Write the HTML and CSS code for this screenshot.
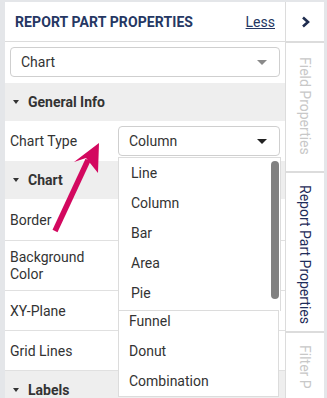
FILE: index.html
```html
<!DOCTYPE html>
<html>
<head>
<meta charset="utf-8">
<link rel="stylesheet" href="styles.css">
</head>
<body>
<div class="app">
  <div class="panel">
    <div class="header">
      <span class="title">REPORT PART PROPERTIES</span>
      <a class="less">Less</a>
    </div>
    <div class="part-select">
      <div class="select">
        <span>Chart</span>
        <span class="caret caret-light"></span>
      </div>
    </div>
    <div class="section"><span class="tri"></span>General Info</div>
    <div class="row row-type">
      <span class="label">Chart Type</span>
      <div class="select select-type">
        <span>Column</span>
        <span class="caret"></span>
      </div>
    </div>
    <div class="section"><span class="tri"></span>Chart</div>
    <div class="row row-border"><span class="label">Border</span></div>
    <div class="row row-bg"><span class="label">Background<br>Color</span></div>
    <div class="row"><span class="label">XY-Plane</span></div>
    <div class="row"><span class="label">Grid Lines</span></div>
    <div class="section"><span class="tri"></span>Labels</div>

    <div class="list list-top">
      <div class="item">Line</div>
      <div class="item">Column</div>
      <div class="item">Bar</div>
      <div class="item">Area</div>
      <div class="item">Pie</div>
      <div class="thumb"></div>
    </div>
    <div class="list list-bottom">
      <div class="item">Funnel</div>
      <div class="item">Donut</div>
      <div class="item">Combination</div>
    </div>

    <svg class="arrow" width="120" height="110" viewBox="0 0 120 110">
      <line x1="55" y1="231" x2="88" y2="160" stroke="#d3085f" stroke-width="5.5" transform="translate(0,-130)"/>
      <polygon points="99,143 74,162 86,158 98,173" fill="#d3085f" transform="translate(0,-130)"/>
    </svg>
  </div>
  <div class="tabs">
    <div class="tab tab-toggle">
      <svg width="10" height="12" viewBox="0 0 10 12"><polyline points="2,1.5 7,6 2,10.5" fill="none" stroke="#1f2d4f" stroke-width="2.6"/></svg>
    </div>
    <div class="tab tab-field"><span class="vtext">Field Properties</span></div>
    <div class="tab tab-report"><span class="vtext">Report Part Properties</span></div>
    <div class="tab tab-filter"><span class="vtext">Filter P</span></div>
  </div>
</div>
</body>
</html>
```

FILE: styles.css
```css
* { box-sizing: border-box; }
html, body { margin: 0; padding: 0; }
body {
  background: #e4e6e9;
  font-family: Roboto, "Liberation Sans", sans-serif;
  color: #333;
  width: 327px;
  height: 398px;
  overflow: hidden;
}
.app {
  display: flex;
  padding: 2px 3px 0 5px;
  height: 398px;
}
.panel {
  position: relative;
  width: 281px;
  background: #fff;
  border-right: 1px solid #dcdcdc;
  display: flex;
  flex-direction: column;
  overflow: hidden;
}
.panel > * { flex-shrink: 0; }
.header {
  height: 40px;
  display: flex;
  align-items: center;
  justify-content: space-between;
  padding: 0 10px 0 10px;
  border-bottom: 1px solid #dcdcdc;
}
.title {
  font-weight: bold;
  font-size: 14px;
  color: #253763;
  letter-spacing: 0.1px;
}
.less {
  font-size: 14px;
  color: #253763;
  text-decoration: underline;
}
.part-select {
  padding: 5px 5px 6px 5px;
}
.select {
  height: 30px;
  border: 1px solid #cfcfcf;
  border-radius: 4px;
  display: flex;
  align-items: center;
  justify-content: space-between;
  padding: 0 12px 0 10px;
  font-size: 14px;
  background: #fff;
}
.caret {
  width: 0; height: 0;
  border-left: 5px solid transparent;
  border-right: 5px solid transparent;
  border-top: 5px solid #222;
}
.caret-light { border-top-color: #8a8a8a; }
.section {
  height: 38px;
  background: #eeeeee;
  display: flex;
  align-items: center;
  padding-left: 8px;
  font-weight: bold;
  font-size: 14px;
  color: #333;
}
.tri {
  width: 0; height: 0;
  border-left: 3.5px solid transparent;
  border-right: 3.5px solid transparent;
  border-top: 4px solid #333;
  margin-right: 9px;
}
.row {
  height: 40px;
  display: flex;
  align-items: center;
  padding-left: 5px;
  border-bottom: 1px solid #e0e0e0;
  font-size: 14px;
}
.row-type { border-bottom: none; justify-content: space-between; padding-right: 5px; }
.select-type { width: 162px; }
.row-border { height: 42px; }
.row-bg { height: 50px; line-height: 17px; }
.label { color: #333; }
.list {
  position: absolute;
  background: #fff;
  border: 1px solid #dcdcdc;
  font-size: 14px;
  color: #333;
}
.list-top {
  left: 113px;
  top: 155px;
  width: 163px;
  height: 154px;
  border-bottom: none;
  overflow: hidden;
}
.list-top .item { padding-left: 12px; }
.list-bottom {
  left: 113px;
  top: 308px;
  width: 161px;
  height: 87px;
}
.list-bottom .item { padding-left: 10px; }
.list-bottom .item:first-child { margin-top: -5px; }
.item {
  height: 30px;
  line-height: 30px;
}
.thumb {
  position: absolute;
  right: 1px;
  top: 3px;
  width: 8px;
  height: 138px;
  background: #808080;
  border-radius: 4px;
}
.arrow {
  position: absolute;
  left: -5px;
  top: 128px;
}
.tabs {
  width: 38px;
  display: flex;
  flex-direction: column;
  gap: 2px;
  background: #dcdcdc;
}
.tab {
  background: #fff;
  display: flex;
  justify-content: center;
  flex-shrink: 0;
}
.tab-toggle {
  height: 39px;
  align-items: center;
  padding-left: 2px;
}
.tab-field { height: 128px; padding-top: 14px; }
.tab-report { height: 158px; padding-top: 12px; }
.tab-filter { flex: 1; padding-top: 12px; overflow: hidden; }
.vtext {
  writing-mode: vertical-rl;
  font-size: 14px;
  white-space: nowrap;
}
.tab-field .vtext, .tab-filter .vtext { color: #c8c8c8; }
.tab-report .vtext { color: #1f2d5a; }
```
